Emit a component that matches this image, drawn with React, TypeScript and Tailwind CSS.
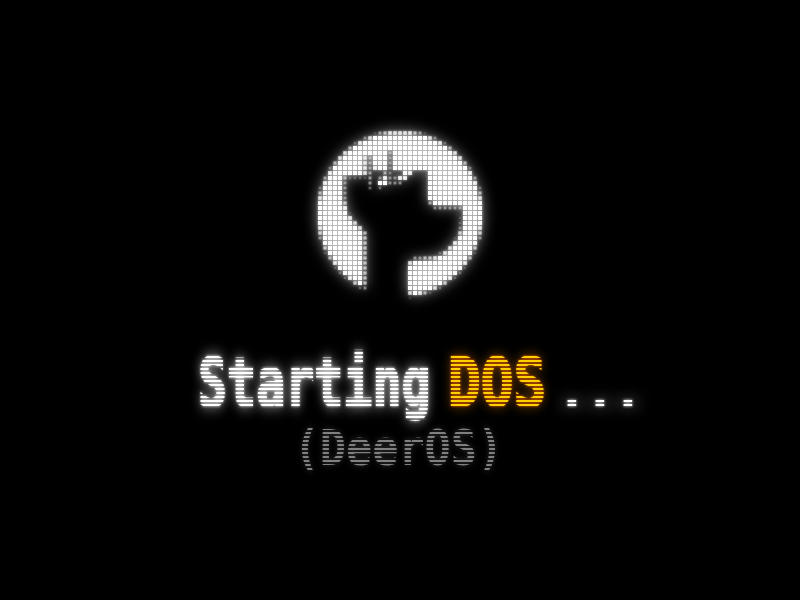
const stripes =
  "bg-[repeating-linear-gradient(to_bottom,var(--c)_0px,var(--c)_2px,transparent_2px,transparent_4px)] bg-clip-text text-transparent";

const whiteGlow = "[filter:drop-shadow(0_0_1.5px_#fff)_drop-shadow(0_0_7px_#ffffffbb)]";

// deer silhouette, in logo coordinates
const deer: [number, number][] = [
  [45, 57], [67, 57], [67, 36], [128, 36], [128, 80], [134, 88], [163, 88], [161, 108], [158, 117],
  [150, 127], [145, 132], [135, 137], [113, 139], [108, 143], [108, 170], [113, 190], [66, 190],
  [66, 112], [55, 102], [48, 93], [45, 80],
];

const inDeer = (x: number, y: number) => {
  let hit = false;
  for (let i = 0, j = deer.length - 1; i < deer.length; j = i++) {
    const [xi, yi] = deer[i];
    const [xj, yj] = deer[j];
    if (yi > y !== yj > y && x < ((xj - xi) * (y - yi)) / (yj - yi) + xi) hit = !hit;
  }
  return hit;
};

// antler dots that stay lit inside the silhouette: [col, row, opacity]
const antlers: [number, number, number][] = [
  [17, 6, 0.4],
  [14, 7, 1], [15, 7, 1], [16, 7, 1], [18, 7, 1], [19, 7, 1], [20, 7, 1], [21, 7, 1], [22, 7, 1], [23, 7, 1], [24, 7, 1],
  [14, 8, 1], [15, 8, 1], [16, 8, 1], [18, 8, 1], [19, 8, 1], [20, 8, 1], [21, 8, 1], [22, 8, 1], [23, 8, 1], [24, 8, 1],
  [14, 9, 0.9], [15, 9, 1], [16, 9, 1], [18, 9, 1], [19, 9, 1], [20, 9, 1], [21, 9, 1], [22, 9, 1], [23, 9, 1], [24, 9, 1],
  [13, 7, 0.45], [13, 8, 0.45], [13, 9, 0.45], [13, 10, 0.45], [13, 11, 0.45], [13, 12, 0.45], [13, 13, 0.3],
  [17, 7, 0.35], [17, 8, 0.35], [17, 9, 0.35], [17, 10, 0.3], [17, 11, 0.4], [17, 12, 0.4],
  [16, 10, 0.5], [20, 10, 1], [21, 10, 0.9],
  [15, 11, 0.4], [16, 11, 0.9], [18, 11, 0.4], [19, 11, 0.9], [20, 11, 0.9],
  [15, 12, 1], [16, 12, 1], [18, 12, 0.4], [19, 12, 0.4],
  [15, 13, 0.3],
];

const cells: { x: number; y: number; o: number }[] = [];
for (let r = 0; r < 36; r++) {
  for (let c = 0; c < 38; c++) {
    const x = 3 + c * 5;
    const y = 1 + r * 5;
    const fixed = antlers.find((a) => a[0] === c && a[1] === r);
    if (fixed) {
      cells.push({ x, y, o: fixed[2] });
      continue;
    }
    let lit = 0;
    for (let i = 0; i < 5; i++) {
      for (let j = 0; j < 5; j++) {
        const px = x + i;
        const py = y + j;
        if (Math.hypot(px - 100, py - 94) < 83 && !inDeer(px, py)) lit++;
      }
    }
    const o = lit / 25;
    if (o >= 0.12) cells.push({ x, y, o });
  }
}

const DeerLogo = () => (
  <svg
    width="200"
    height="185"
    viewBox="0 0 200 185"
    className="block overflow-visible [filter:drop-shadow(0_0_1.5px_#ffffffbb)_drop-shadow(0_0_7px_#ffffffaa)]"
  >
    {cells.map((d) => {
      const s = 2 + 2 * d.o;
      return <rect key={`${d.x}-${d.y}`} x={d.x + (4 - s) / 2} y={d.y + (4 - s) / 2} width={s} height={s} fill="#fff" opacity={d.o} />;
    })}
  </svg>
);

const App = () => {
  return (
    <main className="flex h-[600px] w-[800px] flex-col items-center overflow-hidden bg-black pt-[120px] font-['DejaVu_Sans_Mono',monospace]">
      <DeerLogo />

      {/* headline */}
      <div className="mt-[39px] flex h-[77px] w-[800px] items-start pl-[198px] text-[68px] leading-[77px] font-bold">
        <span
          className={`mr-[-80px] w-[330px] origin-left scale-x-[0.71] whitespace-nowrap [-webkit-text-stroke:2px_transparent] [--c:#fff] ${whiteGlow} ${stripes}`}
        >
          Starting
        </span>
        <span
          className={`mr-[-16.5px] w-[124px] origin-left scale-x-[0.8] [-webkit-text-stroke:2px_transparent] [--c:#ffd000] [filter:drop-shadow(0_0_1px_#ff5a00)_drop-shadow(0_0_6px_#ff8c0088)] ${stripes}`}
        >
          DOS
        </span>
        <span
          className={`w-[90px] origin-left scale-x-[1.2] text-[44px] leading-[94px] tracking-[-3.2px] whitespace-nowrap [--c:#fff] ${whiteGlow} ${stripes}`}
        >
          ...
        </span>
      </div>

      {/* subtitle */}
      <div
        className={`mt-[3px] ml-[-4px] origin-center scale-x-[0.87] text-[50px] leading-[49px] font-bold whitespace-nowrap [--c:#808080] [filter:drop-shadow(0_0_3px_#ffffff44)] ${stripes}`}
      >
        (DeerOS)
      </div>
    </main>
  );
};

export default App;
